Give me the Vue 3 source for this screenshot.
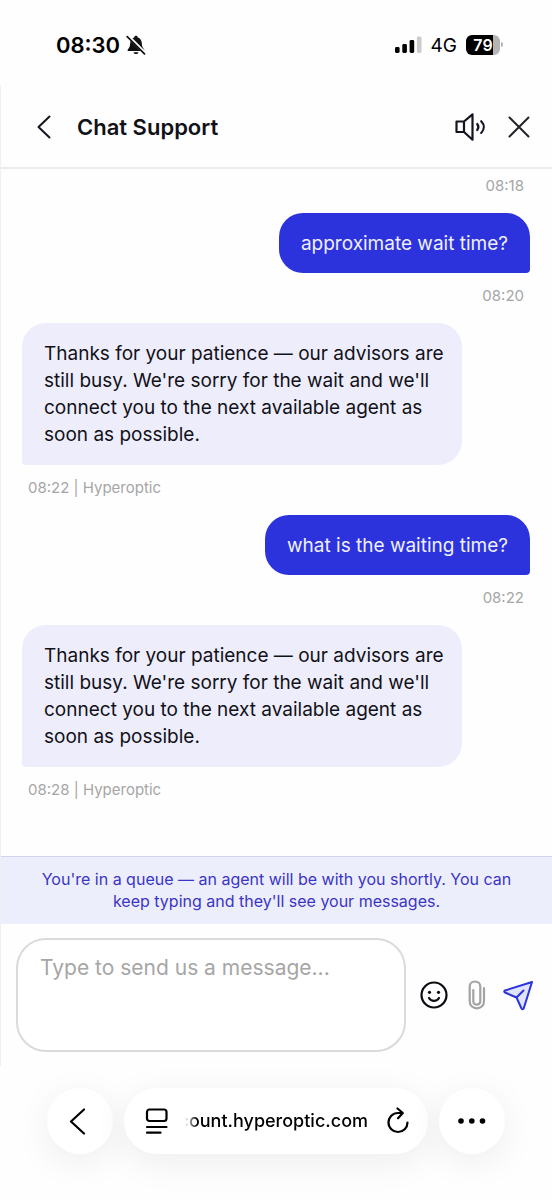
<script setup>
import { ref } from 'vue'

const draft = ref('')
const busy =
  "Thanks for your patience — our advisors are still busy. We're sorry for the wait and we'll connect you to the next available agent as soon as possible."

const messages = [
  { id: 1, side: 'out', text: 'approximate wait time?', meta: '08:20' },
  { id: 2, side: 'in', text: busy, meta: '08:22 | Hyperoptic' },
  { id: 3, side: 'out', text: 'what is the waiting time?', meta: '08:22' },
  { id: 4, side: 'in', text: busy, meta: '08:28 | Hyperoptic' },
]
</script>

<template>
  <div class="phone">
    <div class="status">
      <div class="clock">
        <span class="time">08:30</span>
        <svg width="20" height="20" viewBox="0 0 20 20" aria-hidden="true">
          <path d="M10 .8c-1 0-1.700.7-1.800 1.600C5.600 3.200 4.300 5.400 4.200 8c-.1 3.600-.8 4.600-2.200 6.200-.8 1-.5 1.900.6 1.900h14.800c1.100 0 1.400-.9.600-1.900-1.400-1.600-2.100-2.600-2.200-6.200-.1-2.600-1.400-4.800-4-5.600C11.700 1.500 11 .8 10 .8Z" fill="#111" />
          <path d="M7.500 17.200h5c-.3 1.200-1.300 1.900-2.500 1.900s-2.200-.7-2.500-1.900Z" fill="#111" />
          <path d="M2 1.200 19 18" stroke="#fff" stroke-width="3.200" />
          <path d="M1.200 1.700 18.500 18.800" stroke="#111" stroke-width="1.700" stroke-linecap="round" />
        </svg>
      </div>
      <div class="signal">
        <svg width="27" height="18" viewBox="0 0 27 18" aria-hidden="true">
          <rect x="0" y="11" width="4.600" height="6" rx="1.400" fill="#000" />
          <rect x="7.300" y="8" width="4.600" height="9" rx="1.400" fill="#000" />
          <rect x="14.600" y="4" width="4.600" height="13" rx="1.400" fill="#000" />
          <rect x="21.900" y="0.500" width="4.600" height="16.500" rx="1.400" fill="#ccc" />
        </svg>
        <span class="net">4G</span>
        <div class="battery"><span class="level">79</span></div>
      </div>
    </div>

    <main class="chat">
      <header class="head">
        <button class="icon" type="button" aria-label="Back">
          <svg width="16" height="26" viewBox="0 0 16 26" fill="none" stroke="#15151f" stroke-width="2" stroke-linecap="round" stroke-linejoin="round">
            <path d="M14.500 2.500 3.500 13l11 10.500" />
          </svg>
        </button>
        <h1>Chat Support</h1>
        <button class="icon" type="button" aria-label="Sound">
          <svg width="32" height="30" viewBox="0 0 32 30" fill="none" stroke="#15151f" stroke-width="2.200" stroke-linejoin="round" stroke-linecap="round">
            <path d="M1.500 9.500h7.500v10.500H1.500zM9 9.500l8.500-7.200v25.400L9 20" />
            <path d="M22.200 12c1.500 1.900 1.500 4.200 0 6.100M26.200 9.200c3.400 3.500 3.400 8.200 0 11.700" />
          </svg>
        </button>
        <button class="icon close" type="button" aria-label="Close">
          <svg width="24" height="24" viewBox="0 0 24 24" fill="none" stroke="#22222a" stroke-width="2" stroke-linecap="round">
            <path d="M2.500 2.500l19 19M21.500 2.500l-19 19" />
          </svg>
        </button>
      </header>

      <section class="log" aria-label="Messages">
        <p class="meta first">08:18</p>
        <article v-for="m in messages" :key="m.id" class="msg" :class="m.side">
          <p class="bubble">{{ m.text }}</p>
          <p class="meta">{{ m.meta }}</p>
        </article>
      </section>

      <p class="queue">You're in a queue — an agent will be with you shortly. You can keep typing and they'll see your messages.</p>

      <form class="composer" @submit.prevent>
        <textarea v-model="draft" aria-label="Message" placeholder="Type to send us a message..."></textarea>
        <button class="icon" type="button" aria-label="Emoji">
          <svg width="28" height="28" viewBox="0 0 28 28" fill="none" stroke="#0c0c12" stroke-width="2.200" stroke-linecap="round">
            <circle cx="14" cy="14" r="12.500" />
            <path d="M9 17c2.200 3.800 7.800 3.800 10 0" />
            <circle cx="9.500" cy="11.300" r="1.600" fill="#0c0c12" stroke="none" />
            <circle cx="18.500" cy="11.300" r="1.600" fill="#0c0c12" stroke="none" />
          </svg>
        </button>
        <button class="icon" type="button" aria-label="Attach a file">
          <svg class="clip" width="18" height="30" viewBox="-2 0 18 30" fill="none" stroke="#a3a3a3" stroke-width="2.200" stroke-linecap="round">
            <path d="M12.300 7.500V6.600c0-6.800-10.600-6.800-10.600 0v14.700c0 9.300 14.300 9.300 14.300 0V8.200M12.300 7.500v13.800c0 4.500-7 4.500-7 0V10" />
          </svg>
        </button>
        <button class="icon" type="submit" aria-label="Send">
          <svg width="32" height="32" viewBox="0 0 32 32" fill="none" stroke="#2c33dc" stroke-width="2" stroke-linecap="round" stroke-linejoin="round">
            <path d="M30 3 3 11.500c-1 .4-1 1.500 0 2L14.500 18.500 19.500 29.500c.6 1 1.800 1 2.200 0Z" fill="#dfe3fb" />
            <path d="M14.500 18.500 21.500 11.500" />
          </svg>
        </button>
      </form>
    </main>

    <nav class="browser" aria-label="Browser">
      <button class="round" type="button" aria-label="Previous page">
        <svg width="22" height="28" viewBox="0 0 22 28" fill="none" stroke="#000" stroke-width="2.200" stroke-linecap="round" stroke-linejoin="round">
          <path d="M15 2.500 2 14.500 15 26.500" />
        </svg>
      </button>
      <div class="address">
        <button class="icon" type="button" aria-label="Page menu">
          <svg width="24" height="28" viewBox="0 0 24 28" fill="none" stroke="#000" stroke-width="2.200" stroke-linecap="round">
            <rect x="2" y="2.500" width="19.500" height="11.500" rx="2.500" />
            <path d="M2 20h19.500M2 25.700h13.500" />
          </svg>
        </button>
        <button class="url" type="button">count.hyperoptic.com</button>
        <button class="icon" type="button" aria-label="Reload">
          <svg width="24" height="28" viewBox="0 0 24 28" fill="none" stroke="#000" stroke-width="2.200" stroke-linecap="round" stroke-linejoin="round">
            <path d="M21.500 15.500A9.500 9.500 0 1 1 12 6h4.500M11.500 1.500 16.800 6l-4.800 5.200" />
          </svg>
        </button>
      </div>
      <button class="round" type="button" aria-label="More">
        <svg width="28" height="6" viewBox="0 0 28 6" fill="#000">
          <circle cx="3" cy="3" r="2.800" />
          <circle cx="13.800" cy="3" r="2.800" />
          <circle cx="24.500" cy="3" r="2.800" />
        </svg>
      </button>
    </nav>
  </div>
</template>

<style>
body {
  background: #fff;
}
</style>

<style scoped>
.phone {
  display: flex;
  flex-direction: column;
  min-height: 100vh;
  overflow: hidden;
  background: #fefefe;
  color: #111118;
  font-family: Inter, "Liberation Sans", sans-serif;
}
.phone * {
  box-sizing: border-box;
}
p,
h1 {
  margin: 0;
}
button {
  border: 0;
  padding: 0;
  background: none;
  color: inherit;
  font: inherit;
  cursor: pointer;
}
.icon {
  display: flex;
  flex: none;
}
svg {
  display: block;
  flex: none;
}
.clip {
  overflow: visible;
}

.status {
  display: flex;
  align-items: center;
  justify-content: space-between;
  height: 85px;
  padding: 5px 52px 0 56px;
  color: #000;
}
.clock,
.signal {
  display: flex;
  align-items: center;
}
.clock {
  gap: 6px;
}
.time {
  font-size: 22px;
  font-weight: 600;
}
.signal {
  gap: 9px;
}
.net {
  font-size: 19px;
}
.battery {
  position: relative;
  width: 34px;
  height: 20px;
  border-radius: 6px;
  background: linear-gradient(90deg, #000 79%, #b5b5b5 79%);
  color: #fff;
  font-size: 16px;
  font-weight: 600;
  line-height: 20px;
  text-align: center;
}
.battery::after {
  content: "";
  position: absolute;
  top: 7px;
  right: -3px;
  width: 2px;
  height: 5px;
  border-radius: 0 2px 2px 0;
  background: #b5b5b5;
}

.chat {
  display: flex;
  flex: 1;
  flex-direction: column;
  border-left: 1px solid #f0f0f0;
}
.head {
  display: flex;
  align-items: center;
  height: 84px;
  padding: 2px 21px 0 34px;
  border-bottom: 2px solid #ececec;
}
h1 {
  flex: 1;
  padding-left: 26px;
  font-size: 22px;
  font-weight: 600;
}
.close {
  margin-left: 20px;
}

.log {
  flex: 1;
  padding: 6px 22px 0 21px;
}
.meta {
  padding: 0 6px;
  color: #a6a6a6;
  font-size: 15px;
  line-height: 22px;
}
.first {
  padding-bottom: 16px;
  text-align: right;
}
.msg {
  display: flex;
  flex-direction: column;
  gap: 12px;
  padding-bottom: 16px;
}
.msg.out {
  align-items: flex-end;
}
.msg.in {
  align-items: flex-start;
}
.bubble {
  max-width: 440px;
  padding: 17px 22px 16px;
  font-size: 19px;
  line-height: 27px;
}
.in .bubble {
  padding: 17px 16px 17px 22px;
  border-radius: 24px 24px 24px 4px;
  background: #eeedfb;
}
.out .bubble {
  border-radius: 24px 24px 4px 24px;
  background: #2d33dc;
  color: #eff0ff;
}

.queue {
  padding: 11px 32px 12px;
  border-top: 1px solid #cfd3f2;
  background: #edeefc;
  color: #3a35c4;
  font-size: 16px;
  line-height: 22px;
  text-align: center;
}
.composer {
  display: flex;
  align-items: center;
  gap: 18px;
  padding: 14px 18px 14px 15px;
}
textarea {
  flex: 1;
  min-width: 0;
  height: 114px;
  margin-right: -4px;
  padding: 15px 22px;
  border: 2px solid #dadada;
  border-radius: 30px;
  background: #fff;
  color: #111118;
  font: 21px/26px Inter, "Liberation Sans", sans-serif;
  resize: none;
}
textarea::placeholder {
  color: #a6a6a6;
  opacity: 1;
}

.browser {
  display: flex;
  gap: 11px;
  padding: 22px 47px 46px;
}
.round,
.address {
  height: 66px;
  border-radius: 33px;
  background: #fff;
  box-shadow: 0 8px 36px rgba(0, 0, 0, 0.07);
}
.round {
  display: flex;
  flex: none;
  align-items: center;
  justify-content: center;
  width: 66px;
}
.address {
  display: flex;
  flex: 1;
  align-items: center;
  min-width: 0;
  padding: 0 18px 0 21px;
}
.url {
  flex: 1;
  min-width: 0;
  margin: 0 18px 0 8px;
  color: #000;
  font-size: 18px;
  font-weight: 500;
  line-height: 26px;
  text-align: right;
  white-space: nowrap;
  -webkit-mask-image: linear-gradient(90deg, transparent 8px, #000 20px);
  mask-image: linear-gradient(90deg, transparent 8px, #000 20px);
}
</style>
